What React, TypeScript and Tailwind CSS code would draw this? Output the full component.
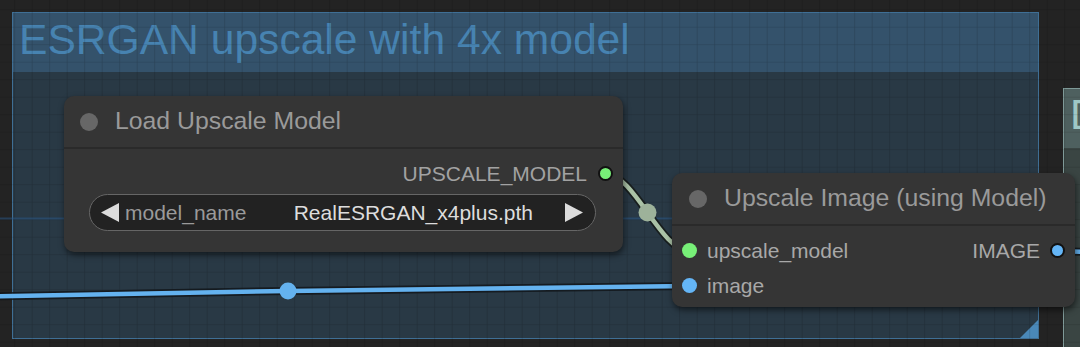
import type { ReactNode } from 'react';

// ComfyUI canvas: group "ESRGAN upscale with 4x model" with two nodes and their links

function Dot({ color, ring }: { color: 'green' | 'blue'; ring?: boolean }) {
  const fill = color === 'green' ? 'bg-[#78f078]' : 'bg-[#64b5f6]';
  return (
    <span
      className={`block w-[15px] h-[15px] rounded-full shrink-0 ${fill} ${ring ? 'border-2 border-[#111]' : ''}`}
    />
  );
}

function NodeTitle({ children, pad }: { children: ReactNode; pad: 'a' | 'b' }) {
  return (
    <div
      className={`h-[53px] shrink-0 flex items-center border-b-2 border-[#2a2a2a] ${pad === 'a' ? 'pl-[16px]' : 'pl-[17px]'}`}
    >
      <span className="block w-[18px] h-[18px] rounded-full bg-[#676767]" />
      <span className="ml-[17px] text-[24.8px] leading-none text-[#9a9a9a] whitespace-nowrap">{children}</span>
    </div>
  );
}

function Arrow({ dir }: { dir: 'left' | 'right' }) {
  return (
    <svg width="18" height="19" viewBox="0 0 18 19" className="shrink-0">
      <polygon points={dir === 'left' ? '18,0 18,19 0,9.5' : '0,0 0,19 18,9.5'} fill="#dcdcdc" />
    </svg>
  );
}

function Links() {
  return (
    <svg width="1080" height="347" className="absolute inset-0">
      {/* faint link behind the group */}
      <line x1="0" y1="218.5" x2="680" y2="218.5" stroke="#2a5a8c" strokeOpacity="0.5" strokeWidth="2" />
      {/* image link */}
      <path d="M-20 296.5 L288 291 L689 286" fill="none" stroke="#101418" strokeOpacity="0.8" strokeWidth="8" />
      <path d="M-20 296.5 L288 291 L689 286" fill="none" stroke="#64b2ef" strokeWidth="4.5" />
      <circle cx="288" cy="291" r="8.5" fill="#64b2ef" />
      <path d="M1057 251 L1090 252" fill="none" stroke="#101418" strokeOpacity="0.8" strokeWidth="8" />
      <path d="M1057 251 L1090 252" fill="none" stroke="#64b2ef" strokeWidth="4.5" />
      {/* upscale model link */}
      <path d="M606 174 C634 174 661 251 689 251" fill="none" stroke="#141814" strokeOpacity="0.8" strokeWidth="8" />
      <path d="M606 174 C634 174 661 251 689 251" fill="none" stroke="#aac2a6" strokeWidth="4.5" />
      <circle cx="647.5" cy="212.5" r="9" fill="#9db29a" />
    </svg>
  );
}

function Grid() {
  return (
    <svg width="1080" height="347" className="absolute inset-0">
      <defs>
        <pattern id="grid" x="14.2" y="9.2" width="17.5" height="17.5" patternUnits="userSpaceOnUse">
          <path d="M0 0 L17.5 0 M0 0 L0 17.5" stroke="#000" strokeOpacity="0.2" strokeWidth="1.2" fill="none" />
        </pattern>
      </defs>
      <rect width="1080" height="347" fill="url(#grid)" />
    </svg>
  );
}

export default function App() {
  return (
    <div className="relative w-[1080px] h-[347px] overflow-hidden bg-[#232323] font-['Liberation_Sans',Arial,sans-serif]">
      {/* groups */}
      <div className="absolute left-[12px] top-[12px] w-[1027px] h-[327px] border border-[#3f6f95] bg-[#293945] flex flex-col">
        <div className="h-[59px] shrink-0 bg-[#34526b] pl-[6px] pt-[5px]">
          <span className="text-[42.6px] leading-[42px] text-[#4783b1] whitespace-nowrap">ESRGAN upscale with 4x model</span>
        </div>
        <div className="flex-1 flex items-end justify-end">
          <svg width="18" height="18" viewBox="0 0 18 18">
            <polygon points="18,0 18,18 0,18" fill="#4a88b8" />
          </svg>
        </div>
      </div>
      <div className="absolute left-[1063px] top-[88px] w-[400px] h-[400px] border border-[#7f9a98] bg-[#3a4543] flex flex-col">
        <div className="h-[59px] shrink-0 bg-[#4e605f] pl-[6px] pt-[5px]">
          <span className="text-[42px] leading-[42px] text-[#9fc8c6] whitespace-nowrap">D</span>
        </div>
      </div>

      <Grid />
      <Links />

      {/* Load Upscale Model */}
      <div className="absolute left-[64px] top-[96px] w-[559px] h-[156px] rounded-[10px] bg-[#353535] shadow-[1px_3px_6px_rgba(0,0,0,0.55)] flex flex-col">
        <NodeTitle pad="a">Load Upscale Model</NodeTitle>
        <div className="pt-[7px] flex flex-col">
          <div className="h-[35px] flex items-center justify-end gap-[11px] pr-[10px]">
            <span className="text-[21px] leading-none text-[#a2a2a2]">UPSCALE_MODEL</span>
            <Dot color="green" ring />
          </div>
          <div className="mt-[3px] ml-[25px] mr-[27px] h-[37px] rounded-full border border-[#666] bg-[#222] flex items-center pl-[11px] pr-[12px]">
            <Arrow dir="left" />
            <span className="ml-[6px] text-[21px] leading-none text-[#9a9a9a]">model_name</span>
            <span className="flex-1" />
            <span className="text-[21px] leading-none text-[#dddddd]">RealESRGAN_x4plus.pth</span>
            <span className="w-[32px]" />
            <Arrow dir="right" />
          </div>
        </div>
      </div>

      {/* Upscale Image (using Model) */}
      <div className="absolute left-[672px] top-[173px] w-[403px] h-[134px] rounded-[10px] bg-[#353535] shadow-[1px_3px_6px_rgba(0,0,0,0.55)] flex flex-col">
        <NodeTitle pad="b">Upscale Image (using Model)</NodeTitle>
        <div className="pt-[7px] flex flex-col">
          <div className="h-[35px] flex items-center justify-between pl-[10px] pr-[10px]">
            <div className="flex items-center gap-[10px]">
              <Dot color="green" />
              <span className="text-[21px] leading-none text-[#a8a8a8]">upscale_model</span>
            </div>
            <div className="flex items-center gap-[10px]">
              <span className="text-[21px] leading-none text-[#a8a8a8]">IMAGE</span>
              <Dot color="blue" ring />
            </div>
          </div>
          <div className="h-[35px] flex items-center gap-[10px] pl-[10px]">
            <Dot color="blue" />
            <span className="text-[21px] leading-none text-[#a8a8a8]">image</span>
          </div>
        </div>
      </div>
    </div>
  );
}
